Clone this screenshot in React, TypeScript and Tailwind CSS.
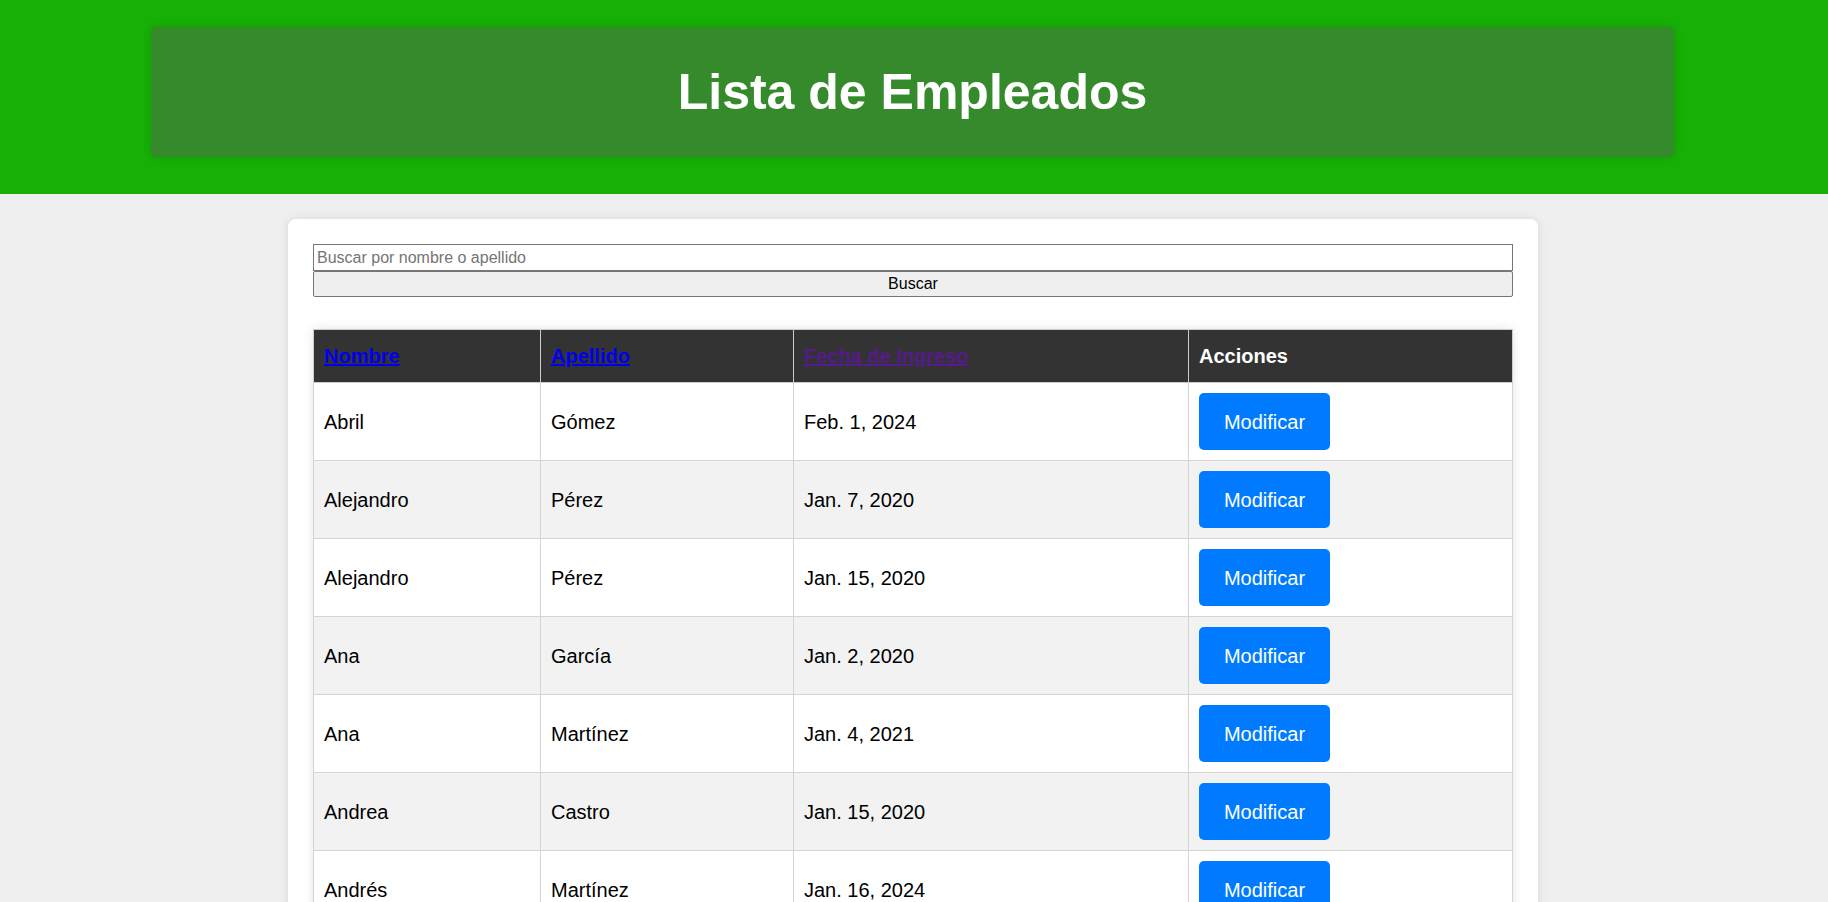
import React from 'react'

type Employee = { nombre: string; apellido: string; fecha: string }

const employees: Employee[] = [
  { nombre: 'Abril', apellido: 'Gómez', fecha: 'Feb. 1, 2024' },
  { nombre: 'Alejandro', apellido: 'Pérez', fecha: 'Jan. 7, 2020' },
  { nombre: 'Alejandro', apellido: 'Pérez', fecha: 'Jan. 15, 2020' },
  { nombre: 'Ana', apellido: 'García', fecha: 'Jan. 2, 2020' },
  { nombre: 'Ana', apellido: 'Martínez', fecha: 'Jan. 4, 2021' },
  { nombre: 'Andrea', apellido: 'Castro', fecha: 'Jan. 15, 2020' },
  { nombre: 'Andrés', apellido: 'Martínez', fecha: 'Jan. 16, 2024' },
  { nombre: 'Carlos', apellido: 'López', fecha: 'Mar. 3, 2022' },
]

const HeaderCell: React.FC<{ children: React.ReactNode }> = ({ children }) => (
  <th className="h-[53px] px-[10px] text-left text-[20px] font-bold border border-[#cccccc] text-white">
    {children}
  </th>
)

export default function App() {
  return (
    <div className="min-h-screen bg-[#efefef] font-['Liberation_Sans',Arial,sans-serif] text-black">
      <header className="bg-[#16b006] pt-[27px] pb-[37px]">
        <div className="ml-[151px] mr-[154px] h-[130px] flex items-center justify-center rounded-[5px] bg-[#358a2c] shadow-[0_0_10px_rgba(0,0,0,0.12)]">
          <h1 className="text-[50px] font-bold text-white leading-none">Lista de Empleados</h1>
        </div>
      </header>

      <main className="pt-[25px]">
        <div className="w-[1250px] ml-[288px] bg-white rounded-[8px] p-[25px] shadow-[0_0_10px_rgba(0,0,0,0.1)]">
          <form className="flex flex-col" onSubmit={(e) => e.preventDefault()}>
            <input
              type="text"
              placeholder="Buscar por nombre o apellido"
              className="w-full h-[27px] px-[3px] text-[16px] border border-[#767676] bg-white outline-none placeholder:text-[#757575]"
            />
            <button
              type="submit"
              className="w-full h-[26px] text-[16px] bg-[#efefef] border border-[#767676] rounded-[2px]"
            >
              Buscar
            </button>
          </form>

          {/* tabla de empleados */}
          <table className="mt-[32px] w-full table-fixed border-collapse shadow-[0_0_10px_rgba(0,0,0,0.1)]">
            <colgroup>
              <col className="w-[227px]" />
              <col className="w-[253px]" />
              <col className="w-[395px]" />
              <col />
            </colgroup>
            <thead>
              <tr className="bg-[#333333]">
                <HeaderCell>
                  <a href="#" className="text-[#0000ee] underline">Nombre</a>
                </HeaderCell>
                <HeaderCell>
                  <a href="#" className="text-[#0000ee] underline">Apellido</a>
                </HeaderCell>
                <HeaderCell>
                  <a href="#" className="text-[#551a8b] underline">Fecha de Ingreso</a>
                </HeaderCell>
                <HeaderCell>Acciones</HeaderCell>
              </tr>
            </thead>
            <tbody>
              {employees.map((emp, i) => (
                <tr key={i} className={`h-[78px] border-b border-[#cccccc] ${i % 2 === 1 ? 'bg-[#f2f2f2]' : 'bg-white'}`}>
                  <td className="px-[10px] text-[20px] border border-[#d4d4d4]">{emp.nombre}</td>
                  <td className="px-[10px] text-[20px] border border-[#d4d4d4]">{emp.apellido}</td>
                  <td className="px-[10px] text-[20px] border border-[#d4d4d4]">{emp.fecha}</td>
                  <td className="px-[10px] border border-[#d4d4d4]">
                    <button className="w-[131px] h-[57px] rounded-[5px] bg-[#007bff] text-white text-[20px]">
                      Modificar
                    </button>
                  </td>
                </tr>
              ))}
            </tbody>
          </table>
        </div>
      </main>
    </div>
  )
}
